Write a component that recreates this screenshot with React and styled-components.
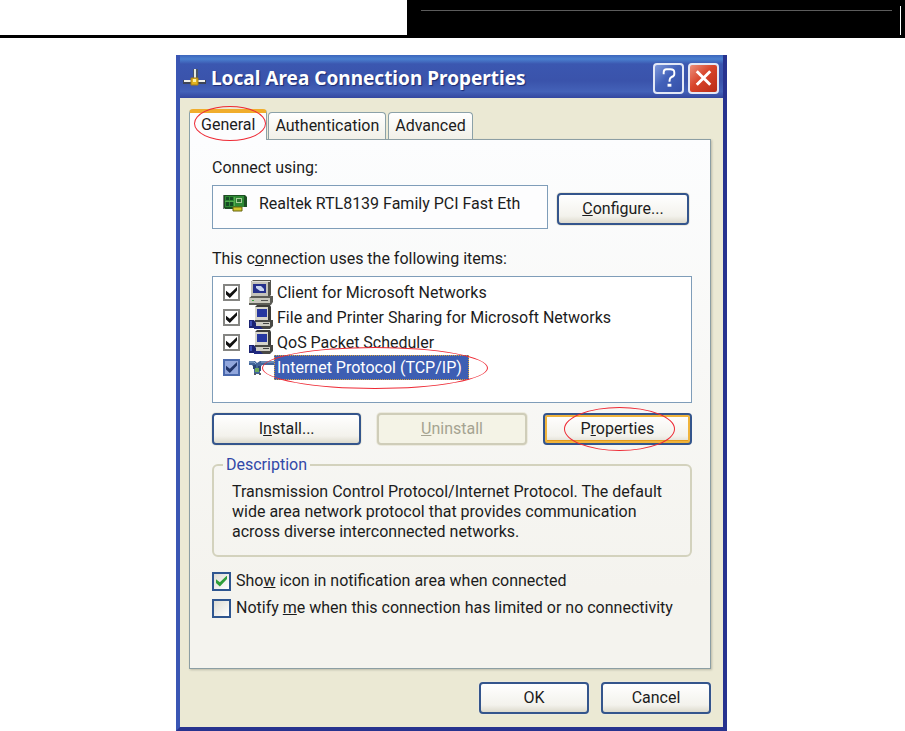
import React, { useState } from "react";
import styled, { createGlobalStyle, css } from "styled-components";

const GlobalStyle = createGlobalStyle`
  * {
    box-sizing: border-box;
  }
  body {
    margin: 0;
    background: #ffffff;
  }
  body, button, input {
    font-family: "Roboto", "Liberation Sans", sans-serif;
    font-size: 16px;
    line-height: 20px;
    color: #1c1c1c;
  }
`;

function ConnectionIcon() {
  return (
    <svg width="24" height="20" viewBox="0 0 24 20" aria-hidden="true">
      <path d="M0 12h23v4H0z" fill="#3d4457" />
      <path d="M1 12h21v2H1z" fill="#f0f0ea" />
      <path d="M10 1h5v9h-5z" fill="#4a5468" />
      <path d="M11 1h2v9h-2z" fill="#e6eae2" />
      <path d="M8 10h7v7H8z" fill="#e2b21e" stroke="#a67c14" />
      <path d="M10 11h3v3h-3z" fill="#fdf0a4" />
    </svg>
  );
}

function AdapterIcon() {
  return (
    <svg width="26" height="18" viewBox="0 0 26 18" aria-hidden="true">
      <path d="M1 1h22l2 2v10h-5v2H3l-2-2z" fill="#1d4f23" />
      <path d="M1 1h1v14H1z" fill="#777" />
      <path d="M3 2h19v11H3z" fill="#2f8a35" />
      <path d="M4 3h3v3H4zM8 3h3v3H8zM4 8h3v4H4zM8 8h3v4H8z" fill="#164b24" />
      <path d="M14 4h6v5h-6z" fill="#a9cf9b" />
      <path d="M15 5h4v3h-4z" fill="#2b6e31" />
      <path d="M12 3h1v9h-1zM3 7h9v1H3z" fill="#55ad50" />
      <path d="M11 13h9v4h-9z" fill="#d2c52c" stroke="#66640f" />
    </svg>
  );
}

function ClientIcon() {
  return (
    <svg width="25" height="25" viewBox="0 0 25 25" aria-hidden="true">
      <path d="m2 2 2-2h18v15l-2 2H2z" fill="#55554f" />
      <path d="M2 2h17v14H2z" fill="#c4c2b9" />
      <path d="M3 1h18v1H3z" fill="#e2e0d8" />
      <path d="M4 4h13v9H4z" fill="#26318c" />
      <path d="M7 6h5l3 3v2h-4L7 8z" fill="#c9d5ef" />
      <path d="m0 18 3-2h21v6l-2 3H0z" fill="#5c5c56" />
      <path d="M0 18h21v5H0z" fill="#c9c8be" />
      <path d="M3 20h2v1H3z" fill="#35a83a" />
      <path d="M12 20h7v1h-7z" fill="#555" />
    </svg>
  );
}

function ServiceIcon() {
  return (
    <svg width="25" height="25" viewBox="0 0 25 25" aria-hidden="true">
      <path d="m6 2 2-2h13l1 2v13l-2 2H6z" fill="#3c3c3a" />
      <path d="M6 2h13v13H6z" fill="#d6d4cb" />
      <path d="M8 4h10v8H8z" fill="#2637a0" />
      <path d="m4 18 3-3h17v6l-3 3H9z" fill="#484844" />
      <path d="M6 17h15v4H6z" fill="#cfcdc3" />
      <path d="M14 18h6v1h-6z" fill="#444" />
      <path d="M0 15h5l2 3v5H0z" fill="#1b2372" />
      <path d="M5 21h6l3 3H5z" fill="#202a80" />
      <path d="M1 16h2v5H1z" fill="#3e50b8" />
    </svg>
  );
}

function ProtocolIcon() {
  return (
    <svg width="25" height="25" viewBox="0 0 25 25" aria-hidden="true">
      <path d="M0 6h6l2 2 3-2h14v4H13l-2 3v6H5v-6l-2-3H0z" fill="#42659a" />
      <path d="M0 7h5l2 2M12 7h13" stroke="#8fb0d2" fill="none" />
      <path d="M4 10h3v4H4zM9 11h3v5H9z" fill="#294777" />
      <path d="M6 13h4v4H6z" fill="#6caa59" />
      <path d="M5 18h2v2H5zM10 18h2v2h-2z" fill="#555b62" />
    </svg>
  );
}

const items = [
  { id: "client", name: "Client for Microsoft Networks", icon: <ClientIcon /> },
  { id: "file", name: "File and Printer Sharing for Microsoft Networks", icon: <ServiceIcon /> },
  { id: "qos", name: "QoS Packet Scheduler", icon: <ServiceIcon /> },
  { id: "tcp", name: "Internet Protocol (TCP/IP)", icon: <ProtocolIcon />, selected: true },
];

function App() {
  const [tab, setTab] = useState("General");
  return (
    <>
      <GlobalStyle />
      <PageHeader>
        <HeaderBlock>
          <HeaderRule />
          <HeaderMark />
        </HeaderBlock>
      </PageHeader>
      <Main>
        <Dialog aria-labelledby="dialog-title">
          <TitleBar>
            <ConnectionIcon />
            <Title id="dialog-title">Local Area Connection Properties</Title>
            <TitleButton aria-label="Help">
              <svg width="28" height="28" viewBox="0 0 28 28" aria-hidden="true">
                <path
                  d="M9 10V8q0-3 3-3h4q4 0 4 3v2q0 2-3 3-2 1-2 5"
                  fill="none"
                  stroke="#fff"
                  strokeWidth="2"
                />
                <path d="M13 20h4v3h-4z" fill="#fff" />
              </svg>
            </TitleButton>
            <TitleButton $close aria-label="Close">
              <svg width="28" height="28" viewBox="0 0 28 28" aria-hidden="true">
                <path d="m7 7 14 14M21 7 7 21" stroke="#fff" strokeWidth="3" />
              </svg>
            </TitleButton>
          </TitleBar>
          <Body>
            <Tabs role="tablist">
              {["General", "Authentication", "Advanced"].map((name) => (
                <Tab
                  key={name}
                  role="tab"
                  aria-selected={tab === name}
                  $active={tab === name}
                  onClick={() => setTab(name)}
                >
                  {name}
                  {name === "General" && <Ring $inset="-7px 0 -1px 4px" />}
                </Tab>
              ))}
            </Tabs>
            <Panel role="tabpanel">
              <Label>Connect using:</Label>
              <AdapterRow>
                <Adapter>
                  <AdapterIcon />
                  <AdapterName>Realtek RTL8139 Family PCI Fast Eth</AdapterName>
                </Adapter>
                <AdapterAction>
                  <Button>
                    <u>C</u>onfigure...
                  </Button>
                </AdapterAction>
              </AdapterRow>
              <Label $spaced>
                This c<u>o</u>nnection uses the following items:
              </Label>
              <List>
                {items.map((item) => (
                  <ListItem key={item.id}>
                    <ItemCheck
                      id={item.id}
                      type="checkbox"
                      defaultChecked
                      $selected={item.selected}
                    />
                    {item.icon}
                    <ItemName htmlFor={item.id} $selected={item.selected}>
                      {item.name}
                      {item.selected && <Ring $inset="-8px -19px -9px -12px" />}
                    </ItemName>
                  </ListItem>
                ))}
              </List>
              <Actions>
                <Button>
                  I<u>n</u>stall...
                </Button>
                <Button disabled>
                  <u>U</u>ninstall
                </Button>
                <Button $focused>
                  P<u>r</u>operties
                  <Ring $inset="-8px 15px -8px 19px" />
                </Button>
              </Actions>
              <Description>
                <legend>Description</legend>
                <p>
                  Transmission Control Protocol/Internet Protocol. The default
                  <br />
                  wide area network protocol that provides communication
                  <br />
                  across diverse interconnected networks.
                </p>
              </Description>
              <Option>
                <OptionCheck type="checkbox" defaultChecked />
                <span>
                  Sho<u>w</u> icon in notification area when connected
                </span>
              </Option>
              <Option>
                <OptionCheck type="checkbox" />
                <span>
                  Notify <u>m</u>e when this connection has limited or no connectivity
                </span>
              </Option>
            </Panel>
            <Footer>
              <Button $wide>OK</Button>
              <Button $wide>Cancel</Button>
            </Footer>
          </Body>
        </Dialog>
      </Main>
    </>
  );
}

const PageHeader = styled.header`
  display: flex;
  justify-content: flex-end;
  height: 38px;
  border-bottom: 3px solid #000;
`;

const HeaderBlock = styled.div`
  display: flex;
  width: 55%;
  background: #000;
  padding: 6px 4px 0 14px;
`;

const HeaderRule = styled.div`
  flex: 1;
  height: 5px;
  margin-right: 8px;
  border-bottom: 1px solid #5c5c5c;
`;

const HeaderMark = styled.div`
  width: 1px;
  background: #fff;
`;

const Main = styled.main`
  display: flex;
  justify-content: center;
  padding: 17px 2px 0 0;
`;

const Dialog = styled.section`
  width: 100%;
  max-width: 551px;
  background: #27338f;
  border: solid #27338f;
  border-width: 0 4px 4px;
  border-left-color: #3a56b4;
`;

const TitleBar = styled.div`
  display: flex;
  align-items: center;
  height: 43px;
  gap: 4px;
  padding: 3px 4px 0 3px;
  background: linear-gradient(#3c66bc 0, #4a80cf 4px, #3b57b0 9px, #3a53ab 60%, #4462b8 85%, #34479f);
`;

const Title = styled.h1`
  flex: 1;
  margin: 0;
  font-family: "Noto Sans", "Open Sans", sans-serif;
  font-size: 19px;
  line-height: 24px;
  font-weight: 700;
  color: #fff;
  text-shadow: 1px 1px 1px #1b2a72;
  white-space: nowrap;
`;

const TitleButton = styled.button`
  display: flex;
  align-items: center;
  justify-content: center;
  width: 31px;
  height: 31px;
  padding: 0;
  border: 2px solid #e3e8f6;
  border-radius: 4px;
  background: ${(p) =>
    p.$close
      ? "linear-gradient(135deg, #ec8f7b, #d8442a 45%, #b92c18)"
      : "linear-gradient(135deg, #7f98da, #4261b9 45%, #3550a8)"};
`;

const Body = styled.div`
  padding: 11px 12px 13px 9px;
  background: #ebe9d4;
`;

const Tabs = styled.div`
  display: flex;
  align-items: flex-end;
  gap: 2px;
  height: 30px;
`;

const Tab = styled.button`
  position: relative;
  height: 27px;
  padding: 3px 6px;
  border: 1px solid #8ba1a8;
  border-bottom: 0;
  border-radius: 4px 4px 0 0;
  background: linear-gradient(#ffffff, #f1f0e8);
  white-space: nowrap;
  ${(p) =>
    p.$active &&
    css`
      height: 31px;
      margin: 0 -1px -1px 0;
      padding: 0 11px 4px;
      border-top: 4px solid #f0ad2c;
      background: #fcfdfe;
      z-index: 1;
    `}
`;

const Panel = styled.div`
  padding: 18px 18px 43px 22px;
  border: 1px solid #8c9ea3;
  background: linear-gradient(#fcfdfe, #f4f3ee 85%);
  box-shadow: 1px 1px 2px #bcbba9;
`;

const Label = styled.div`
  margin: ${(p) => (p.$spaced ? "20px 0 7px" : "0 0 7px")};
`;

const AdapterRow = styled.div`
  display: flex;
  align-items: flex-end;
`;

const Adapter = styled.div`
  display: flex;
  align-items: flex-start;
  flex: 1;
  min-width: 0;
  height: 44px;
  padding: 8px 19px 0 9px;
  gap: 11px;
  border: 1px solid #7f9db9;
  background: #fdfdfe;
  svg {
    flex: none;
  }
`;

const AdapterName = styled.span`
  overflow: hidden;
  white-space: nowrap;
`;

const AdapterAction = styled.div`
  display: flex;
  flex: 0 0 30%;
  padding: 0 3px 4px 9px;
`;

const Button = styled.button`
  position: relative;
  flex: ${(p) => (p.$wide ? "none" : "1")};
  width: ${(p) => (p.$wide ? "110px" : "auto")};
  height: 32px;
  padding: 0 8px;
  border: 2px solid #34558c;
  border-radius: 4px;
  background: linear-gradient(#ffffff, #f3f2ec 75%, #dddacd);
  box-shadow: 0 0 0 1px #eceade;
  ${(p) =>
    p.$focused &&
    css`
      box-shadow: inset 0 0 0 2px #f0b43c, inset 0 -3px 0 #e59a1c;
    `}
  &:disabled {
    border-color: #cfcdb9;
    background: #f4f3e6;
    color: #a5a391;
  }
`;

const List = styled.ul`
  margin: 0;
  padding: 3px 10px;
  min-height: 127px;
  list-style: none;
  border: 1px solid #7f9db9;
  background: #fff;
`;

const ListItem = styled.li`
  display: flex;
  align-items: center;
  height: 25px;
  svg {
    margin-left: 9px;
  }
`;

const ItemName = styled.label`
  position: relative;
  height: 25px;
  padding: 3px 7px 2px 3px;
  white-space: nowrap;
  ${(p) =>
    p.$selected &&
    css`
      color: #fff;
      background: #3d5eb3;
      outline: 1px dotted #d8a23c;
      outline-offset: -1px;
    `}
`;

const checkMark = css`
  appearance: none;
  display: grid;
  place-items: center;
  flex: none;
  margin: 0;
  &:checked::before {
    content: "";
    width: 11px;
    height: 11px;
    background: currentColor;
    clip-path: polygon(0 35%, 35% 62%, 100% 0, 100% 32%, 35% 100%, 0 68%);
  }
`;

const ItemCheck = styled.input`
  ${checkMark}
  width: 17px;
  height: 17px;
  border: 2px solid #858582;
  background: #fff;
  color: #111;
  ${(p) =>
    p.$selected &&
    css`
      border-color: #4a69ad;
      background: #91a6dc;
      color: #203469;
    `}
`;

const Actions = styled.div`
  display: grid;
  grid-template-columns: repeat(3, 1fr);
  gap: 16px;
  margin: 10px 0;
`;

const Description = styled.fieldset`
  margin: 0 0 14px;
  padding: 7px 16px 13px 18px;
  border: 2px solid #d3d2bd;
  border-radius: 6px;
  legend {
    margin-left: -9px;
    padding: 0 3px;
    color: #3148a8;
  }
  p {
    margin: 0;
  }
`;

const Option = styled.label`
  display: flex;
  align-items: center;
  gap: 5px;
  height: 20px;
  margin-bottom: 7px;
  white-space: nowrap;
`;

const OptionCheck = styled.input`
  ${checkMark}
  width: 19px;
  height: 19px;
  border: 2px solid #2f5690;
  background: linear-gradient(135deg, #dddcd4, #ffffff);
  color: #2f9e3a;
`;

const Footer = styled.div`
  display: flex;
  justify-content: flex-end;
  gap: 12px;
  padding-top: 13px;
`;

/* red marker drawn around a control */
const Ring = styled.span`
  position: absolute;
  inset: ${(p) => p.$inset};
  border: 1px solid #ee2a35;
  border-radius: 50%;
  pointer-events: none;
  z-index: 2;
`;

export default App;
